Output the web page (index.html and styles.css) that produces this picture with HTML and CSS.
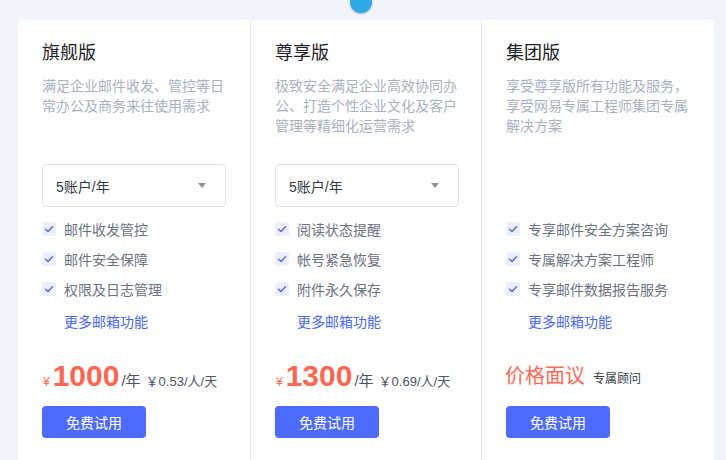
FILE: index.html
```html
<!DOCTYPE html>
<html lang="zh-CN">
<head>
<meta charset="utf-8">
<link rel="stylesheet" href="styles.css">
</head>
<body>
<div class="page">
  <span class="dot"></span>
  <div class="card">
    <section class="plan">
      <h2 class="title">旗舰版</h2>
      <p class="desc">满足企业邮件收发、管控等日常办公及商务来往使用需求</p>
      <div class="select"><span>5账户/年</span><i class="caret"></i></div>
      <ul class="features">
        <li><span class="check"><svg viewBox="0 0 14 14"><path d="M3.5 7.2 L6 9.4 L10.5 4.8"/></svg></span>邮件收发管控</li>
        <li><span class="check"><svg viewBox="0 0 14 14"><path d="M3.5 7.2 L6 9.4 L10.5 4.8"/></svg></span>邮件安全保障</li>
        <li><span class="check"><svg viewBox="0 0 14 14"><path d="M3.5 7.2 L6 9.4 L10.5 4.8"/></svg></span>权限及日志管理</li>
      </ul>
      <a class="more">更多邮箱功能</a>
      <div class="price"><span class="yen">¥</span><span class="num">1000</span><span class="unit">/年</span><span class="per">￥0.53/人/天</span></div>
      <button class="btn">免费试用</button>
    </section>
    <section class="plan">
      <h2 class="title">尊享版</h2>
      <p class="desc">极致安全满足企业高效协同办公、打造个性企业文化及客户管理等精细化运营需求</p>
      <div class="select"><span>5账户/年</span><i class="caret"></i></div>
      <ul class="features">
        <li><span class="check"><svg viewBox="0 0 14 14"><path d="M3.5 7.2 L6 9.4 L10.5 4.8"/></svg></span>阅读状态提醒</li>
        <li><span class="check"><svg viewBox="0 0 14 14"><path d="M3.5 7.2 L6 9.4 L10.5 4.8"/></svg></span>帐号紧急恢复</li>
        <li><span class="check"><svg viewBox="0 0 14 14"><path d="M3.5 7.2 L6 9.4 L10.5 4.8"/></svg></span>附件永久保存</li>
      </ul>
      <a class="more">更多邮箱功能</a>
      <div class="price"><span class="yen">¥</span><span class="num">1300</span><span class="unit">/年</span><span class="per">￥0.69/人/天</span></div>
      <button class="btn">免费试用</button>
    </section>
    <section class="plan">
      <h2 class="title">集团版</h2>
      <p class="desc">享受尊享版所有功能及服务，享受网易专属工程师集团专属解决方案</p>
      <div class="select select-empty"></div>
      <ul class="features">
        <li><span class="check"><svg viewBox="0 0 14 14"><path d="M3.5 7.2 L6 9.4 L10.5 4.8"/></svg></span>专享邮件安全方案咨询</li>
        <li><span class="check"><svg viewBox="0 0 14 14"><path d="M3.5 7.2 L6 9.4 L10.5 4.8"/></svg></span>专属解决方案工程师</li>
        <li><span class="check"><svg viewBox="0 0 14 14"><path d="M3.5 7.2 L6 9.4 L10.5 4.8"/></svg></span>专享邮件数据报告服务</li>
      </ul>
      <a class="more">更多邮箱功能</a>
      <div class="price"><span class="talk">价格面议</span><span class="advisor">专属顾问</span></div>
      <button class="btn">免费试用</button>
    </section>
  </div>
</div>
</body>
</html>
```
FILE: styles.css
```css
* { box-sizing: border-box; }
html, body {
  margin: 0;
  padding: 0;
  background: #f1f4f9;
  font-family: "Liberation Sans", "Noto Sans CJK SC", sans-serif;
  overflow: hidden;
}
.page {
  position: relative;
  width: 726px;
  height: 460px;
  padding: 20px 12px 0 18px;
}
.dot {
  position: absolute;
  left: 350px;
  top: -9px;
  width: 22px;
  height: 22px;
  border-radius: 50%;
  background: #2fa8e6;
  box-shadow: 0 1px 2px rgba(0, 60, 120, 0.35);
}
.card {
  display: grid;
  grid-template-columns: 233px 231px 232px;
  width: 696px;
  height: 460px;
  background: #fff;
  border-radius: 5px 5px 0 0;
}
.plan {
  padding: 20px 24px 0 24px;
  border-right: 1px solid #e6e9ef;
}
.plan:last-child { border-right: none; }
.title {
  margin: 0;
  font-size: 18px;
  line-height: 26px;
  font-weight: normal;
  color: #1d2129;
}
.desc {
  margin: 10px 0 0;
  height: 60px;
  font-size: 14px;
  line-height: 20px;
  color: #a9b1c1;
  width: 184px;
}
.select {
  margin-top: 28px;
  height: 43px;
  width: 184px;
  border: 1px solid #dfe3ea;
  border-radius: 4px;
  display: flex;
  align-items: center;
  justify-content: space-between;
  padding: 0 19px 0 13px;
  font-size: 14px;
  color: #333a45;
}
.select-empty { border-color: transparent; }
.caret {
  width: 0;
  height: 0;
  border-left: 4px solid transparent;
  border-right: 4px solid transparent;
  border-top: 5px solid #8c919c;
}
.features {
  list-style: none;
  margin: 7px 0 0;
  padding: 0;
}
.features li {
  display: flex;
  align-items: center;
  height: 30px;
  font-size: 14px;
  color: #6b7282;
}
.check {
  width: 14px;
  height: 14px;
  background: #eceffd;
  border-radius: 2px;
  margin-right: 8px;
  display: flex;
}
.check svg { width: 14px; height: 14px; }
.check path {
  fill: none;
  stroke: #5b6cf0;
  stroke-width: 1.5;
  stroke-linecap: round;
  stroke-linejoin: round;
}
.more {
  display: block;
  margin: 3px 0 0 22px;
  height: 30px;
  line-height: 30px;
  font-size: 14px;
  color: #4a6af5;
}
.price {
  margin-top: 18px;
  height: 40px;
  display: flex;
  align-items: baseline;
  padding-top: 6px;
  line-height: 30px;
  color: #4c5466;
}
.yen {
  font-size: 12px;
  color: #ff6a55;
  margin: 0 3px 0 1px;
}
.num {
  font-size: 30px;
  font-weight: bold;
  color: #ff6753;
}
.unit {
  font-size: 15px;
  margin-left: 2px;
}
.per {
  font-size: 13px;
  margin-left: 5px;
}
.talk {
  font-size: 20px;
  color: #ff6a5a;
  margin-left: -1px;
}
.advisor {
  font-size: 12px;
  color: #333a45;
  margin-left: 8px;
}
.btn {
  display: block;
  margin-top: 11px;
  width: 104px;
  height: 32px;
  border: none;
  border-radius: 4px;
  background: #4e6bff;
  color: #fff;
  font-family: inherit;
  font-size: 14px;
  padding: 0;
}
```
